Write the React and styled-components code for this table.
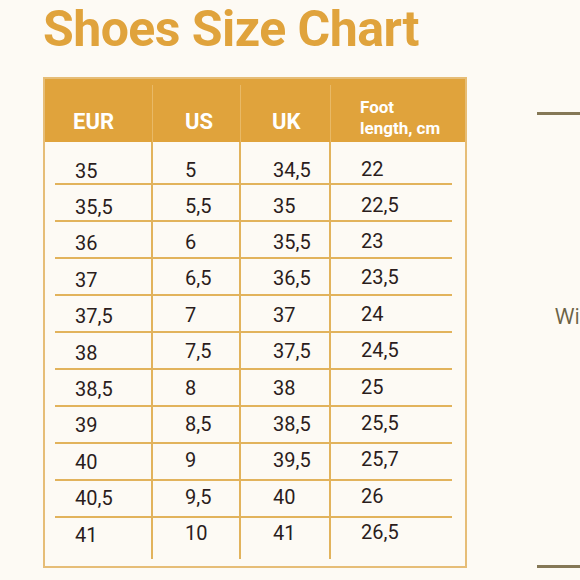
import React from 'react';
import styled, { createGlobalStyle } from 'styled-components';

const GlobalStyle = createGlobalStyle`
  * { box-sizing: border-box; }
  body {
    margin: 0;
    background: #fdfaf4;
    font-family: Roboto, "Liberation Sans", sans-serif;
  }
`;

const GOLD = '#e0a33c';
const LINE = '#e2b35c';

const Page = styled.div`
  width: 580px;
  height: 580px;
  overflow: hidden;
  display: flex;
  background: #fdfaf4;
`;

const Chart = styled.section`
  flex: 0 0 424px;
  margin-left: 43px;
  display: flex;
  flex-direction: column;
`;

const Title = styled.h1`
  margin: 4px 0 0 0;
  font-family: Roboto, "Liberation Sans", sans-serif;
  font-weight: 700;
  font-size: 50px;
  line-height: 50px;
  color: ${GOLD};
  letter-spacing: -0.55px;
  white-space: nowrap;
`;

const Table = styled.div`
  margin-top: 23px;
  width: 424px;
  border: 2px solid #e6bd77;
`;

const cols = '107px 88px 90px 1fr';

const HeadRow = styled.div`
  display: grid;
  grid-template-columns: ${cols};
  height: 63px;
  background: ${GOLD};
  padding-top: 6px;
`;

const HeadCell = styled.div`
  display: flex;
  flex-direction: column;
  justify-content: flex-end;
  padding-left: ${p => p.$left}px;
  padding-bottom: ${p => (p.$small ? 3 : 10)}px;
  border-left: ${p => (p.$first ? 'none' : '1px solid #e8b967')};
  color: #fff;
  font-weight: 700;
  font-size: ${p => (p.$small ? 17 : 22)}px;
  line-height: 21px;
  white-space: nowrap;
`;

const Body = styled.div`
  padding-bottom: 7px;
`;

const Row = styled.div`
  display: grid;
  grid-template-columns: 108px 88px 90px 1fr;
  height: ${p => p.$h}px;
  background: ${p => (p.$last ? 'none' : `linear-gradient(${LINE}, ${LINE}) no-repeat`)};
  background-size: calc(100% - 23px) 2px;
  background-position: 10px 100%;
`;

const Cell = styled.div`
  padding-left: ${p => p.$left}px;
  padding-top: ${p => p.$top}px;
  border-right: ${p => (p.$end ? 'none' : `2px solid ${LINE}`)};
  color: #2b1d1c;
  font-size: 20px;
  line-height: 20px;
  white-space: nowrap;
`;

const Aside = styled.aside`
  flex: 0 0 200px;
  margin-left: 70px;
  display: flex;
  flex-direction: column;
  padding-top: 112px;
`;

const Rule = styled.div`
  height: 3px;
  background: #857856;
`;

const Label = styled.div`
  margin-top: 187px;
  padding-left: 18px;
  font-family: "Open Sans", "Liberation Sans", sans-serif;
  font-size: 21px;
  line-height: 28px;
  color: #6b6245;
  white-space: nowrap;
`;

const Bottom = styled(Rule)`
  margin-top: 235px;
`;

const heads = [
  { text: 'EUR', left: 28 },
  { text: 'US', left: 32 },
  { text: 'UK', left: 31 },
];

const rows = [
  ['35', '5', '34,5', '22'],
  ['35,5', '5,5', '35', '22,5'],
  ['36', '6', '35,5', '23'],
  ['37', '6,5', '36,5', '23,5'],
  ['37,5', '7', '37', '24'],
  ['38', '7,5', '37,5', '24,5'],
  ['38,5', '8', '38', '25'],
  ['39', '8,5', '38,5', '25,5'],
  ['40', '9', '39,5', '25,7'],
  ['40,5', '9,5', '40', '26'],
  ['41', '10', '41', '26,5'],
];

const colLeft = [30, 32, 32, 30];
const colShift = [0, -1.5, -1.5, -2.5];

export default function App() {
  return (
    <Page>
      <GlobalStyle />
      <Chart>
        <Title>Shoes Size Chart</Title>
        <Table>
          <HeadRow>
            {heads.map((h, i) => (
              <HeadCell key={h.text} $left={h.left} $first={i === 0}>{h.text}</HeadCell>
            ))}
            <HeadCell $left={29} $small>
              <span>Foot</span>
              <span>length, cm</span>
            </HeadCell>
          </HeadRow>
          <Body>
            {rows.map((r, i) => {
              const last = i === rows.length - 1;
              const h = i === 0 ? 43 : last ? 41 : 37;
              const top = i === 0 ? 19 : 12 - 0.6 * (i - 1);
              return (
                <Row key={r[0]} $h={h} $last={last}>
                  {r.map((v, j) => (
                    <Cell key={j} $left={colLeft[j]} $top={top + colShift[j]} $end={j === 3}>{v}</Cell>
                  ))}
                </Row>
              );
            })}
          </Body>
        </Table>
      </Chart>
      <Aside>
        <Rule />
        <Label>Width</Label>
        <Bottom />
      </Aside>
    </Page>
  );
}
